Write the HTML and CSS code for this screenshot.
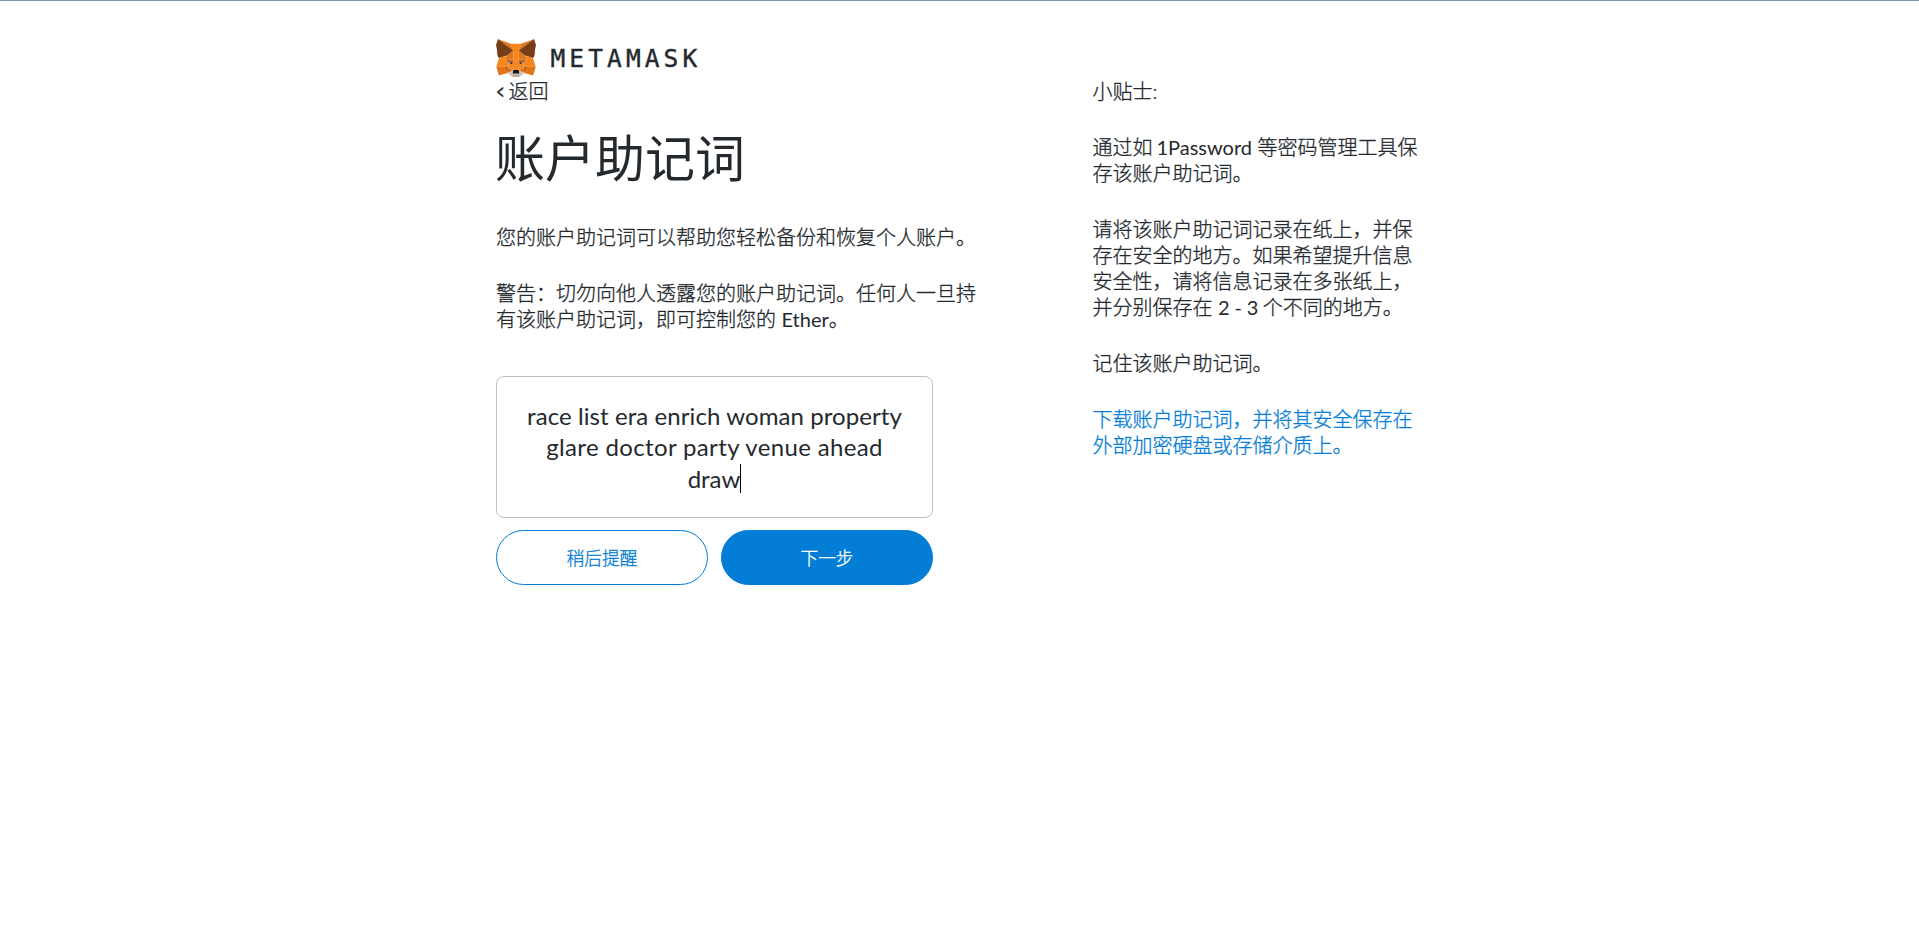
FILE: index.html
```html
<!DOCTYPE html>
<html lang="zh-CN">
<head>
<meta charset="utf-8">
<title>MetaMask</title>
<link rel="stylesheet" href="styles.css">
</head>
<body>
<div class="page">
  <header class="logo">
    <svg class="fox" viewBox="31.8 35.5 255 236.4" preserveAspectRatio="none">
      <g fill="#e2761b"><path d="M274.1 35.5 174.6 109.4 193 65.8zM44.4 35.5 143.1 110.1 125.6 65.8zM238.3 206.8 211.8 247.4 268.5 263 284.8 207.7zM33.9 207.7 50.1 263 106.8 247.4 80.3 206.8zM103.6 138.2 87.8 162.1 144.1 164.6 142.1 104.1zM214.9 138.2 175.9 103.4 174.6 164.6 230.8 162.1zM106.8 247.4 140.6 230.9 111.4 208.1zM177.9 230.9 211.8 247.4 207.1 208.1z"/></g>
      <path fill="#d7c1b3" d="M211.8 247.4 177.9 230.9 180.6 253 180.3 262.3zM106.8 247.4 138.3 262.3 138.1 253 140.6 230.9z"/>
      <path fill="#233447" d="M138.8 193.5 110.6 185.2 130.5 176.1zM179.7 193.5 188 176.1 208 185.2z"/>
      <path fill="#cd6116" d="M106.8 247.4 111.6 206.8 80.3 207.7zM207 206.8 211.8 247.4 238.3 207.7zM230.8 162.1 174.6 164.6 179.8 193.5 188.1 176.1 208.1 185.2zM110.6 185.2 130.6 176.1 138.8 193.5 144.1 164.6 87.8 162.1z"/>
      <path fill="#e4751f" d="M87.8 162.1 111.4 208.1 110.6 185.2zM208.1 185.2 207.1 208.1 230.8 162.1zM144.1 164.6 138.8 193.5 145.4 227.6 146.9 182.7zM174.6 164.6 171.9 182.6 173.1 227.6 179.8 193.5z"/>
      <path fill="#f6851b" d="M179.8 193.5 173.1 227.6 177.9 230.9 207.1 208.1 208.1 185.2zM110.6 185.2 111.4 208.1 140.6 230.9 145.4 227.6 138.8 193.5z"/>
      <path fill="#c0ad9e" d="M180.3 262.3 180.6 253 178.1 250.8 140.4 250.8 138.1 253 138.3 262.3 106.8 247.4 117.8 256.4 140.1 271.9 178.4 271.9 200.8 256.4 211.8 247.4z"/>
      <path fill="#161616" d="M177.9 230.9 173.1 227.6 145.4 227.6 140.6 230.9 138.1 253 140.4 250.8 178.1 250.8 180.6 253z"/>
      <path fill="#763d16" d="M278.3 114.2 286.8 73.4 274.1 35.5 177.9 106.9 214.9 138.2 267.2 153.5 278.8 140 273.8 136.4 281.8 129.1 275.6 124.3 283.6 118.2zM31.8 73.4 40.3 114.2 34.9 118.2 42.9 124.3 36.8 129.1 44.8 136.4 39.8 140 51.3 153.5 103.6 138.2 140.6 106.9 44.4 35.5z"/>
      <path fill="#f6851b" d="M267.2 153.5 214.9 138.2 230.8 162.1 207.1 208.1 238.3 207.7 284.8 207.7zM103.6 138.2 51.3 153.5 33.9 207.7 80.3 207.7 111.4 208.1 87.8 162.1zM174.6 164.6 177.9 106.9 193.1 65.8 125.6 65.8 140.6 106.9 144.1 164.6 145.3 182.8 145.4 227.6 173.1 227.6 173.3 182.8z"/>
    </svg>
    <span class="wordmark">METAMASK</span>
  </header>
  <main class="columns">
    <section class="main">
      <a class="back"><span class="lt">&lt;</span>返回</a>
      <h1>账户助记词</h1>
      <p>您的账户助记词可以帮助您轻松备份和恢复个人账户。</p>
      <p>警告：切勿向他人透露您的账户助记词。任何人一旦持<br>有该账户助记词，即可控制您的 <span class="ether">Ether</span>。</p>
      <div class="phrase">
        <span class="l1">race list era enrich woman property</span>
        <span class="l2">glare doctor party venue ahead</span>
        <span class="l3">draw<i class="caret"></i></span>
      </div>
      <div class="buttons">
        <button class="btn outline">稍后提醒</button>
        <button class="btn primary">下一步</button>
      </div>
    </section>
    <aside class="tips">
      <p>小贴士:</p>
      <p>通过如 <span class="onepass">1Password</span> 等密码管理工具保<br>存该账户助记词。</p>
      <p>请将该账户助记词记录在纸上，并保<br>存在安全的地方。如果希望提升信息<br>安全性，请将信息记录在多张纸上，<br>并分别保存在 <span class="num">2 - 3</span> 个不同的地方。</p>
      <p>记住该账户助记词。</p>
      <p><a class="link">下载账户助记词，并将其安全保存在<br>外部加密硬盘或存储介质上。</a></p>
    </aside>
  </main>
</div>
</body>
</html>
```
FILE: styles.css
```css
* { box-sizing: border-box; }
body {
  margin: 0;
  height: 932px;
  border-top: 1px solid #7c99a9;
  background: #fff;
  color: #24292e;
  font: 300 20px/26px Lato, "Noto Sans CJK SC", sans-serif;
}
.page { padding: 38px 0 0 496px; }
.logo { display: flex; height: 39px; align-items: flex-start; }
.fox { width: 40px; height: 38px; }
.wordmark {
  margin: 6px 0 0 14.5px;
  font: 400 24.5px/28px "DejaVu Sans Mono", monospace;
  letter-spacing: 4.1px;
  -webkit-text-stroke: 0.4px #24292e;
}
.columns { display: flex; }
.main { width: 596.5px; }
.back, p { -webkit-text-stroke: 0.3px currentColor; }
.back { display: flex; }
.lt {
  width: 12.5px;
  font-weight: 400;
  transform: scale(0.75, 1.15);
  transform-origin: 0 55%;
}
h1 {
  margin: 25px 0 37px -1px;
  font-size: 50px;
  line-height: 58px;
  font-weight: 400;
  white-space: nowrap;
}
p { margin: 0 0 30px; white-space: nowrap; }
.ether, .onepass, .num { font-weight: 400; -webkit-text-stroke: 0; }
.onepass { margin-left: -1.5px; }
.num { letter-spacing: -0.1px; margin-right: -1px; }
.phrase {
  display: flex;
  flex-direction: column;
  align-items: center;
  width: 437px;
  height: 142px;
  margin-top: 44px;
  padding-top: 23px;
  border: 1px solid #bbc0c5;
  border-radius: 8px;
  font-size: 24px;
  font-weight: 400;
  line-height: 31.3px;
  white-space: nowrap;
}
.l1 { letter-spacing: 0.08px; }
.l2 { letter-spacing: 0.36px; }
.l3 { display: flex; align-items: center; }
.caret { width: 1px; height: 29px; background: #000; }
.buttons { display: flex; gap: 13px; margin-top: 12px; }
.btn {
  width: 212px;
  height: 55px;
  padding: 2px 0 0;
  border: 1px solid #037dd6;
  border-radius: 28px;
  font: 300 17.7px/25px Lato, "Noto Sans CJK SC", sans-serif;
  -webkit-text-stroke: 0.3px currentColor;
}
.outline { background: #fff; color: #037dd6; }
.primary { background: #037dd6; color: #fff; }
.link { color: #037dd6; }
```
